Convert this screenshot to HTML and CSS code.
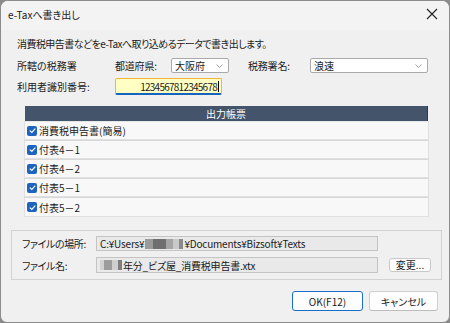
FILE: index.html
```html
<!DOCTYPE html>
<html lang="ja">
<head>
<meta charset="utf-8">
<title>e-Taxへ書き出し</title>
<link rel="stylesheet" href="styles.css">
</head>
<body>
<div class="window">
  <div class="titlebar">
    <span class="title">e-Taxへ書き出し</span>
    <svg class="close" width="12" height="12" viewBox="0 0 12 12"><path d="M1 1 L11 11 M11 1 L1 11" stroke="#222" stroke-width="1.1" fill="none"/></svg>
  </div>
  <div class="content">
    <p class="lead">消費税申告書などをe-Taxへ取り込めるデータで書き出します。</p>
    <div class="row row-office">
      <span class="lbl lbl-office">所轄の税務署</span>
      <span class="lbl lbl-pref">都道府県:</span>
      <div class="select sel-pref"><span>大阪府</span><svg class="chev" width="7" height="4" viewBox="0 0 7 4"><path d="M0.5 0.5 L3.5 3.5 L6.5 0.5" stroke="#8a8a8a" stroke-width="0.8" fill="none"/></svg></div>
      <span class="lbl lbl-name">税務署名:</span>
      <div class="select sel-name"><span>浪速</span><svg class="chev" width="7" height="4" viewBox="0 0 7 4"><path d="M0.5 0.5 L3.5 3.5 L6.5 0.5" stroke="#8a8a8a" stroke-width="0.8" fill="none"/></svg></div>
    </div>
    <div class="row row-id">
      <span class="lbl lbl-office">利用者識別番号:</span>
      <div class="idbox"><span>1234567812345678</span><i class="caret"></i></div>
    </div>
    <div class="list">
      <div class="list-head">出力帳票</div>
      <div class="item"><span class="cb"><svg width="9" height="9" viewBox="0 0 9 9"><path d="M1.8 4.6 L3.8 6.5 L7.3 2.6" stroke="#fff" stroke-width="1.2" fill="none"/></svg></span>消費税申告書(簡易)</div>
      <div class="item"><span class="cb"><svg width="9" height="9" viewBox="0 0 9 9"><path d="M1.8 4.6 L3.8 6.5 L7.3 2.6" stroke="#fff" stroke-width="1.2" fill="none"/></svg></span>付表4－1</div>
      <div class="item"><span class="cb"><svg width="9" height="9" viewBox="0 0 9 9"><path d="M1.8 4.6 L3.8 6.5 L7.3 2.6" stroke="#fff" stroke-width="1.2" fill="none"/></svg></span>付表4－2</div>
      <div class="item"><span class="cb"><svg width="9" height="9" viewBox="0 0 9 9"><path d="M1.8 4.6 L3.8 6.5 L7.3 2.6" stroke="#fff" stroke-width="1.2" fill="none"/></svg></span>付表5－1</div>
      <div class="item item-last"><span class="cb"><svg width="9" height="9" viewBox="0 0 9 9"><path d="M1.8 4.6 L3.8 6.5 L7.3 2.6" stroke="#fff" stroke-width="1.2" fill="none"/></svg></span>付表5－2</div>
    </div>
    <div class="group">
      <div class="frow frow-1">
        <span class="flbl">ファイルの場所:</span>
        <div class="field">C:¥Users¥<i class="blur blur-user"></i>¥Documents¥Bizsoft¥Texts</div>
      </div>
      <div class="frow frow-2">
        <span class="flbl">ファイル名:</span>
        <div class="field"><i class="blur blur-year"></i>年分_ビズ屋_消費税申告書.xtx</div>
        <button class="btn-small">変更...</button>
      </div>
    </div>
    <div class="buttons">
      <button class="btn btn-default">OK(F12)</button>
      <button class="btn">キャンセル</button>
    </div>
  </div>
</div>
</body>
</html>
```
FILE: styles.css
```css
* { box-sizing: border-box; }
html, body {
  margin: 0;
  padding: 0;
  background: #8a8a8a;
}
body {
  width: 450px;
  height: 323px;
  overflow: hidden;
  font-family: "Noto Sans CJK JP", "Noto Sans", sans-serif;
  font-size: 10px;
  font-feature-settings: "palt";
  color: #1b1b1b;
}
.window {
  width: 450px;
  height: 323px;
  border: 1px solid #8c8c8c;
  border-radius: 8px 8px 7px 7px;
  background: #f0f0f0;
  overflow: hidden;
}
.titlebar {
  height: 29px;
  background: #f3f3f3;
  display: flex;
  align-items: center;
  justify-content: space-between;
  padding: 0 11px 3px 7px;
}
.title {
  font-size: 10px;
}
.close { display: block; }
.content {
  padding: 7px 11px 0 16px;
}
.lead {
  margin: 0;
  height: 14px;
  line-height: 14px;
  letter-spacing: -0.55px;
}
.row {
  display: flex;
  align-items: center;
}
.row-office {
  margin-top: 7px;
  height: 15px;
}
.lbl { white-space: nowrap; }
.lbl-office { width: 98px; }
.lbl-pref { width: 56px; letter-spacing: -0.2px; }
.lbl-name { width: 62px; margin-left: 19px; letter-spacing: -0.2px; }
.select {
  height: 15px;
  border: 1px solid #a9a9a9;
  border-radius: 2px;
  background: #fff;
  display: flex;
  align-items: center;
  justify-content: space-between;
  padding: 0 5px 0 3px;
  line-height: 13px;
}
.sel-pref { width: 58px; }
.sel-name { width: 118px; }
.chev { display: block; }
.row-id {
  margin-top: 5px;
  height: 17px;
}
.idbox {
  width: 107px;
  height: 17px;
  background: #ffffc4;
  border: 1px solid #f2b43c;
  border-bottom: 2px solid #1565c0;
  border-radius: 2px;
  display: flex;
  align-items: center;
  justify-content: flex-end;
  padding-right: 2px;
  letter-spacing: -0.75px;
  line-height: 13px;
}
.caret {
  display: block;
  width: 1px;
  height: 11px;
  margin-left: 1px;
  background: #000;
}
.list {
  margin: 11px 0 0 7px;
  width: 405px;
}
.list-head {
  margin-left: 1px;
  width: 403px;
  height: 15px;
  line-height: 15px;
  background: #44546a;
  color: #fff;
  text-align: center;
  border-right: 1px solid #2e3a4a;
}
.item {
  height: 19px;
  background: #f8f8f8;
  border: 1px solid #e0e0e0;
  border-top-color: #e6e6e6;
  display: flex;
  align-items: center;
  padding-left: 2px;
  line-height: 17px;
}
.item + .item { border-top: 1px solid #d8d8d8; }
.item-last { height: 20px; }
.cb {
  width: 10px;
  height: 10px;
  border-radius: 2px;
  background: #1d64c0;
  margin-right: 2px;
  display: flex;
  align-items: center;
  justify-content: center;
}
.cb svg { display: block; }
.group {
  margin: 13px 0 0 -6px;
  width: 431px;
  height: 50px;
  border: 1px solid #d2d2d2;
  padding: 5px 0 0 10px;
}
.frow {
  display: flex;
  align-items: center;
}
.flbl { width: 74px; white-space: nowrap; letter-spacing: -0.4px; }
.field {
  width: 282px;
  height: 15px;
  border: 1px solid #c4c4c4;
  background: #e9e9e9;
  display: flex;
  align-items: center;
  padding-left: 3px;
  line-height: 13px;
  white-space: nowrap;
  overflow: hidden;
  letter-spacing: -0.2px;
}
.frow-2 { margin-top: 6px; }
.frow-2 .field { height: 16px; }
.blur {
  display: inline-block;
  height: 10px;
}
.blur-user {
  width: 38px;
  margin: 0 1px;
  background: linear-gradient(90deg, #9a9a9a 0 20%, #6f6f6f 20% 55%, #a5a5a5 55% 75%, #c9c9c9 75% 90%, #8a8a8a 90% 100%);
}
.blur-year {
  width: 22px;
  margin-right: 1px;
  background: linear-gradient(90deg, #d2d2d2 0 20%, #9c9c9c 20% 55%, #cfcfcf 55% 80%, #7e7e7e 80% 100%);
}
.btn-small {
  margin-left: 11px;
  width: 42px;
  height: 14px;
  border: 1px solid #c8c8c8;
  border-radius: 3px;
  background: #fdfdfd;
  font: inherit;
  color: inherit;
  padding: 0;
  line-height: 12px;
}
.buttons {
  margin-top: 11px;
  display: flex;
  justify-content: flex-end;
  gap: 6px;
}
.btn {
  width: 69px;
  height: 20px;
  border: 1px solid #cfcfcf;
  border-bottom-color: #bcbcbc;
  border-radius: 3px;
  background: #fdfdfd;
  font: inherit;
  color: inherit;
  padding: 0;
}
.btn-default {
  width: 71px;
  border: 1px solid #1a6ecb;
}
```
